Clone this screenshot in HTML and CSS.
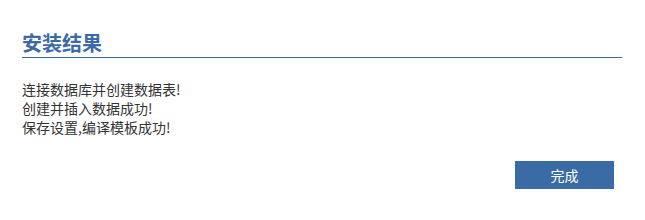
FILE: index.html
```html
<!DOCTYPE html>
<html>
  <head>
    <meta charset="utf-8">
    <title>安装结果</title>
    <link rel="stylesheet" href="styles.css">
  </head>
  <body>
    <div class="panel">
      <h2 class="title">安装结果</h2>
      <div class="messages">
        <p class="message">连接数据库并创建数据表!</p>
        <p class="message">创建并插入数据成功!</p>
        <p class="message">保存设置,编译模板成功!</p>
      </div>
      <div class="actions">
        <button class="button" type="button">完成</button>
      </div>
    </div>
  </body>
</html>
```

FILE: styles.css
```css
body {
  margin: 0;
  padding: 0;
  background-color: #fff;
  font-family: "Noto Sans CJK SC", "Noto Sans", sans-serif;
}

.panel {
  width: 600px;
  margin-left: 22px;
}

.title {
  margin: 30px 0 0;
  padding-bottom: 1px;
  border-bottom: 1px solid #3c6aa4;
  color: #3c6aa4;
  font-size: 20px;
  font-weight: bold;
  line-height: 26px;
}

.messages {
  margin-top: 22px;
  color: #333;
  font-size: 14px;
  line-height: 19px;
}

.message {
  margin: 0;
}

.actions {
  display: flex;
  justify-content: flex-end;
  margin-top: 24px;
  padding-right: 8px;
}

.button {
  width: 99px;
  height: 28px;
  border: 0;
  background-color: #3b6ba5;
  color: #fff;
  font-family: inherit;
  font-size: 14px;
  cursor: pointer;
}
```
